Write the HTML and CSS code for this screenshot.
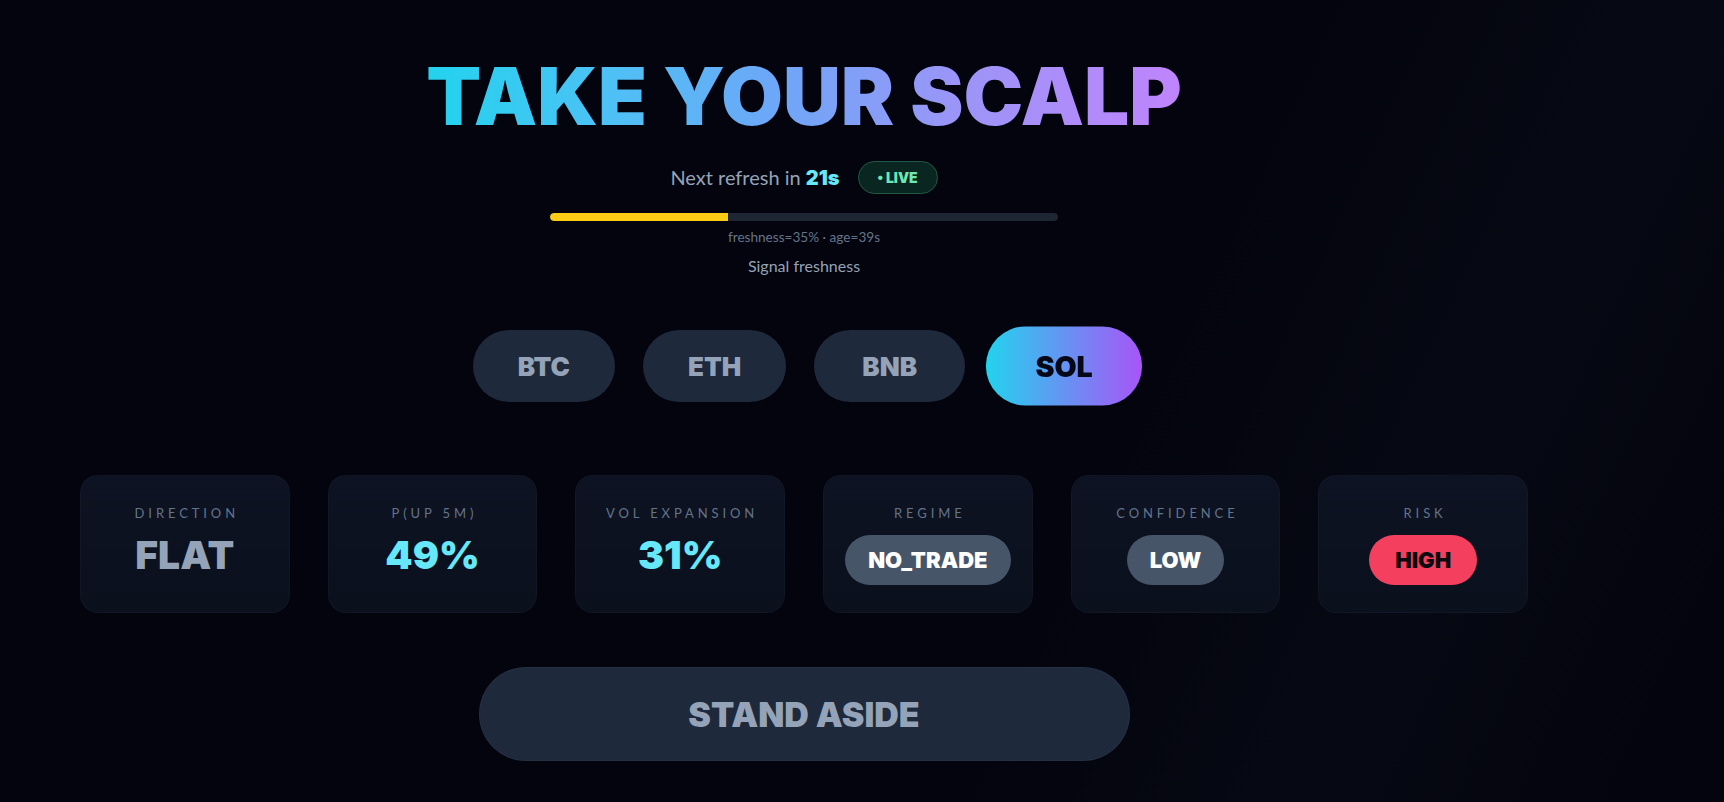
FILE: index.html
```html
<!DOCTYPE html>
<html lang="en">
<head>
<meta charset="utf-8">
<title>Take Your Scalp</title>
<link rel="stylesheet" href="styles.css">
</head>
<body>
<main class="wrap">
  <h1 class="title"><span class="title-text">TAKE YOUR SCALP</span></h1>

  <div class="refresh-row">
    <span class="refresh">Next refresh in <b class="secs">21s</b></span>
    <span class="live">• LIVE</span>
  </div>

  <div class="bar"><div class="bar-fill" style="width:35%"></div></div>
  <div class="bar-meta">freshness=35% · age=39s</div>
  <div class="bar-label">Signal freshness</div>

  <nav class="assets">
    <button class="asset">BTC</button>
    <button class="asset">ETH</button>
    <button class="asset bnb">BNB</button>
    <button class="asset active">SOL</button>
  </nav>

  <section class="cards">
    <div class="card">
      <div class="label">DIRECTION</div>
      <div class="value muted">FLAT</div>
    </div>
    <div class="card">
      <div class="label">P(UP 5M)</div>
      <div class="value cyan">49%</div>
    </div>
    <div class="card">
      <div class="label">VOL EXPANSION</div>
      <div class="value cyan">31%</div>
    </div>
    <div class="card">
      <div class="label">REGIME</div>
      <div class="pill slate">NO_TRADE</div>
    </div>
    <div class="card">
      <div class="label">CONFIDENCE</div>
      <div class="pill slate">LOW</div>
    </div>
    <div class="card">
      <div class="label">RISK</div>
      <div class="pill rose">HIGH</div>
    </div>
  </section>

  <div class="action-row">
    <button class="action">STAND ASIDE</button>
  </div>
</main>
</body>
</html>
```

FILE: styles.css
```css
* { box-sizing: border-box; }
html, body { margin: 0; padding: 0; }
body {
  min-height: 802px;
  background:
    linear-gradient(115deg, rgba(0,0,0,0) 62%, rgba(18, 24, 42, 0.22) 80%, rgba(0,0,0,0) 96%),
    #03040d;
  font-family: Lato, "Open Sans", "Liberation Sans", sans-serif;
  color: #94a3b8;
  overflow: hidden;
}
.wrap {
  margin-left: 80px;
  width: 1448px;
  padding-top: 48px;
  display: flex;
  flex-direction: column;
  align-items: center;
}
.title {
  margin: 0;
  font-family: Inter, Roboto, "Liberation Sans", sans-serif;
  font-size: 80px;
  line-height: 96px;
  font-weight: 900;
  letter-spacing: 0;
}
.title-text {
  display: inline-block;
  background: linear-gradient(90deg, #22d3ee 0%, #4fc0f5 25%, #6ba8f7 45%, #9b95f7 70%, #c084fc 100%);
  -webkit-background-clip: text;
  background-clip: text;
  color: transparent;
}
.refresh-row {
  margin-top: 17px;
  height: 33px;
  display: flex;
  align-items: center;
  gap: 18px;
}
.refresh {
  font-size: 20px;
  color: #94a3b8;
}
.secs {
  color: #67e8f9;
  font-family: Inter, Roboto, "Liberation Sans", sans-serif;
  font-weight: 900;
}
.live {
  height: 33px;
  padding: 0 19px;
  display: inline-flex;
  align-items: center;
  border-radius: 17px;
  background: #0a2620;
  border: 1px solid #1f5a47;
  color: #6ee7b7;
  font-family: Inter, Roboto, "Liberation Sans", sans-serif;
  font-size: 14px;
  font-weight: 900;
}
.bar {
  margin-top: 19px;
  width: 508px;
  height: 8px;
  border-radius: 4px;
  background: #1e2533;
  overflow: hidden;
}
.bar-fill {
  height: 100%;
  background: #facc15;
  border-radius: 4px 0 0 4px;
}
.bar-meta {
  margin-top: 8px;
  font-size: 13.6px;
  line-height: 16px;
  color: #64748b;
}
.bar-label {
  margin-top: 12px;
  font-size: 16px;
  line-height: 18px;
  color: #94a3b8;
}
.assets {
  margin-top: 55px;
  display: flex;
  gap: 28px;
}
.asset {
  height: 72px;
  padding: 0 45px;
  border: 0;
  border-radius: 36px;
  background: #1e293b;
  color: #94a3b8;
  font-family: Inter, Roboto, "Liberation Sans", sans-serif;
  font-size: 26px;
  font-weight: 900;
  cursor: pointer;
}
.asset.bnb { padding: 0 48px; }
.asset.active {
  background: linear-gradient(90deg, #22d3ee, #a855f7);
  color: #050816;
  transform: scale(1.1);
}
.cards {
  margin-top: 73px;
  width: 100%;
  display: grid;
  grid-template-columns: repeat(6, 1fr);
  gap: 38px;
}
.card {
  padding: 27px 12px 27px;
  border-radius: 18px;
  background: linear-gradient(180deg, #0d1322, #0b101d);
  border: 1px solid rgba(148, 163, 184, 0.04);
  display: flex;
  flex-direction: column;
  align-items: center;
}
.label {
  font-size: 13px;
  line-height: 20px;
  letter-spacing: 0.3em;
  margin-right: -0.3em;
  font-weight: 400;
  color: #64748b;
  margin-bottom: 12px;
}
.value {
  font-family: Inter, Roboto, "Liberation Sans", sans-serif;
  font-size: 39px;
  line-height: 40px;
  font-weight: 900;
  margin-bottom: 10px;
}
.value.muted { color: #94a3b8; }
.value.cyan { color: #67e8f9; }
.pill {
  height: 50px;
  padding: 0 23px;
  border-radius: 25px;
  display: inline-flex;
  align-items: center;
  font-family: Inter, Roboto, "Liberation Sans", sans-serif;
  font-size: 22px;
  font-weight: 900;
}
.pill.slate { background: #475569; color: #ffffff; }
.pill.rose { background: #f43f5e; color: #0a0a0f; padding: 0 26px; }
.action-row {
  margin-top: 54px;
}
.action {
  width: 651px;
  height: 94px;
  border: 1px solid rgba(148, 163, 184, 0.06);
  border-radius: 47px;
  background: #1e293b;
  color: #94a3b8;
  font-family: Inter, Roboto, "Liberation Sans", sans-serif;
  font-size: 34px;
  font-weight: 900;
  cursor: pointer;
}
```
